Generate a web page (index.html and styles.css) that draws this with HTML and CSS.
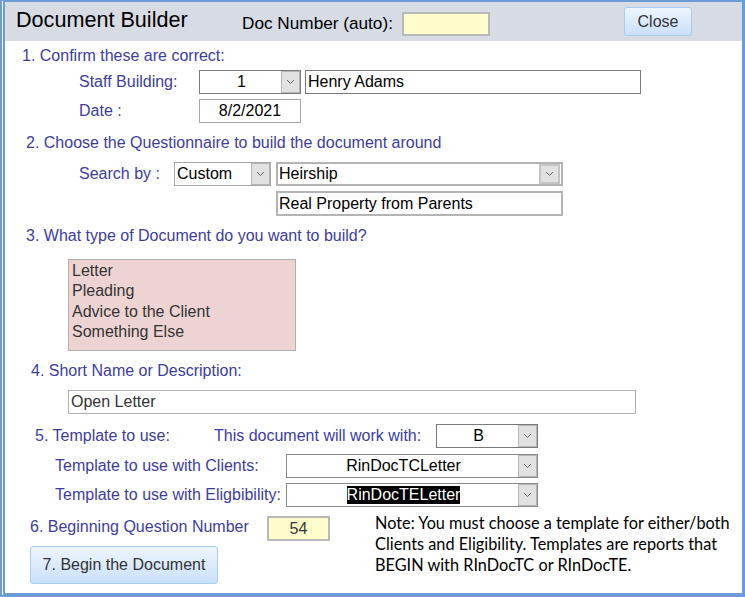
FILE: index.html
```html
<!DOCTYPE html>
<html>
<head>
<meta charset="utf-8">
<title>Document Builder</title>
<link rel="stylesheet" href="styles.css">
</head>
<body>
<div class="window">
  <div class="header">
    <h1 class="title">Document Builder</h1>
    <span class="docnum-label">Doc Number (auto):</span>
    <span class="field yellow docnum"></span>
    <button class="btn close-btn">Close</button>
  </div>
  <div class="body">
    <div class="row head h1">1. Confirm these are correct:</div>
    <div class="row staff">
      <span class="lbl lbl-a">Staff Building:</span>
      <div class="field select dark w-102"><span class="val center">1</span><span class="arrow"><svg width="9" height="6" viewBox="0 0 9 6"><polyline points="1,1 4.5,4.5 8,1" fill="none" stroke="#6a6a6a" stroke-width="1"/></svg></span></div>
      <div class="field dark name">Henry Adams</div>
    </div>
    <div class="row date">
      <span class="lbl lbl-a">Date :</span>
      <div class="field w-102 center">8/2/2021</div>
    </div>
    <div class="row head h2">2. Choose the Questionnaire to build the document around</div>
    <div class="row search">
      <span class="lbl lbl-b">Search by :</span>
      <div class="field select w-97"><span class="val">Custom</span><span class="arrow"><svg width="9" height="6" viewBox="0 0 9 6"><polyline points="1,1 4.5,4.5 8,1" fill="none" stroke="#6a6a6a" stroke-width="1"/></svg></span></div>
      <div class="field select thick w-287"><span class="val">Heirship</span><span class="arrow big"><svg width="9" height="6" viewBox="0 0 9 6"><polyline points="1,1 4.5,4.5 8,1" fill="none" stroke="#6a6a6a" stroke-width="1"/></svg></span></div>
    </div>
    <div class="row prop">
      <div class="field thick w-287">Real Property from Parents</div>
    </div>
    <div class="row head h3">3. What type of Document do you want to build?</div>
    <ul class="listbox">
      <li>Letter</li>
      <li>Pleading</li>
      <li>Advice to the Client</li>
      <li>Something Else</li>
    </ul>
    <div class="row head h4">4. Short Name or Description:</div>
    <div class="row short">
      <div class="field soft shortname">Open Letter</div>
    </div>
    <div class="row tpl">
      <span class="lbl lbl-c">5. Template to use:</span>
      <span class="lbl lbl-d">This document will work with:</span>
      <div class="field select dark w-102"><span class="val center">B</span><span class="arrow"><svg width="9" height="6" viewBox="0 0 9 6"><polyline points="1,1 4.5,4.5 8,1" fill="none" stroke="#6a6a6a" stroke-width="1"/></svg></span></div>
    </div>
    <div class="row clients">
      <span class="lbl lbl-e">Template to use with Clients:</span>
      <div class="field select mid w-252"><span class="val center">RinDocTCLetter</span><span class="arrow"><svg width="9" height="6" viewBox="0 0 9 6"><polyline points="1,1 4.5,4.5 8,1" fill="none" stroke="#6a6a6a" stroke-width="1"/></svg></span></div>
    </div>
    <div class="row elig">
      <span class="lbl lbl-e">Template to use with Eligbibility:</span>
      <div class="field select mid w-252"><span class="val center"><span class="sel">RinDocTELetter</span></span><span class="arrow"><svg width="9" height="6" viewBox="0 0 9 6"><polyline points="1,1 4.5,4.5 8,1" fill="none" stroke="#6a6a6a" stroke-width="1"/></svg></span></div>
    </div>
    <div class="bottom">
      <div class="left-col">
        <div class="row qnum">
          <span class="lbl lbl-f">6. Beginning Question Number</span>
          <div class="field yellow qbox center">54</div>
        </div>
        <button class="btn begin-btn">7. Begin the Document</button>
      </div>
      <p class="note">Note: You must choose a template for either/both Clients and Eligibility. Templates are reports that BEGIN with RInDocTC or RInDocTE.</p>
    </div>
  </div>
</div>
</body>
</html>
```

FILE: styles.css
```css
html, body {
  margin: 0;
  padding: 0;
  background: #ffffff;
}

.window {
  box-sizing: border-box;
  width: 745px;
  height: 597px;
  border-top: 2px solid #6c9cd6;
  border-left: 5px double #6c9cd6;
  border-right: 3px solid #6c9cd6;
  border-bottom: 4px solid #6c9cd6;
  background: #ffffff;
  font-family: "Liberation Sans", Arial, sans-serif;
  display: flex;
  flex-direction: column;
  overflow: hidden;
}

.header {
  height: 39px;
  background: #d6dbe4;
  display: flex;
  align-items: center;
  flex-shrink: 0;
}

.title {
  margin: 0 0 0 11px;
  font-size: 21.6px;
  font-weight: normal;
  color: #000;
  width: 226px;
  position: relative;
  top: -2px;
}

.docnum-label {
  font-size: 17.2px;
  color: #000;
  width: 160px;
  position: relative;
  top: 2px;
}

.docnum {
  width: 88px;
  height: 25px;
  margin-top: 4px;
}

.btn {
  box-sizing: border-box;
  font-family: "Liberation Sans", Arial, sans-serif;
  font-size: 16px;
  color: #333;
  background: linear-gradient(#eef5fd, #c9e0fa);
  border: 1px solid #a9cbee;
  border-radius: 3px;
  padding: 0;
  cursor: default;
}

.close-btn {
  width: 68px;
  height: 29px;
  margin-left: 134px;
}

.body {
  flex: 1;
  display: flex;
  flex-direction: column;
}

.row {
  display: flex;
  align-items: center;
  flex-shrink: 0;
}

.head {
  height: 20px;
  font-size: 16px;
  color: #3d3d9e;
}

.lbl {
  font-size: 16px;
  color: #3d3d9e;
  flex-shrink: 0;
}

.field {
  box-sizing: border-box;
  height: 24px;
  border: 1px solid #a8a8a8;
  background: #fff;
  display: flex;
  align-items: center;
  font-size: 16px;
  color: #000;
  padding: 0 2px;
  white-space: nowrap;
  flex-shrink: 0;
}

.field.dark { border-color: #7a7a7a; }
.field.mid { border-color: #8a8a8a; }
.field.thick { border: 2px solid #b4b4b4; padding: 0 1px; }
.field.soft { border-color: #b0b0b0; }
.field.center { justify-content: center; }
.yellow { background: #fffdcc; border: 2px solid #b9b9b9; }

.select {
  padding: 0 0 0 2px;
}
.select .val {
  flex: 1;
  overflow: hidden;
}
.select .val.center { text-align: center; }
.select .arrow {
  box-sizing: border-box;
  width: 19px;
  height: 22px;
  background: #e1e1e1;
  border: 1px solid #b6b6b6;
  display: flex;
  align-items: center;
  justify-content: center;
}
.select .arrow.big {
  width: 21px;
  height: 20px;
  border: 2px solid #c4c4c4;
}

.sel {
  background: #000;
  color: #fff;
  padding: 1px 0;
}

.w-102 { width: 102px; }
.w-97 { width: 97px; }
.w-287 { width: 287px; }
.w-252 { width: 252px; }

/* section 1 */
.h1 { margin-top: 5px; padding-left: 17px; }
.staff { margin-top: 4px; height: 24px; }
.lbl-a { margin-left: 74px; width: 120px; }
.name { width: 336px; margin-left: 4px; }
.date { margin-top: 5px; height: 24px; }

/* section 2 */
.h2 { margin-top: 10px; padding-left: 21px; }
.search { margin-top: 9px; height: 24px; }
.lbl-b { margin-left: 74px; width: 95px; }
.search .w-287 { margin-left: 5px; }
.prop { margin-top: 5px; height: 25px; padding-left: 271px; }
.prop .field { height: 25px; }

/* section 3 */
.h3 { margin-top: 10px; padding-left: 21px; }
.listbox {
  box-sizing: border-box;
  list-style: none;
  margin: 13px 0 0 63px;
  padding: 1px 3px;
  width: 228px;
  height: 92px;
  background: #eed3d3;
  border: 1px solid #b0b0b0;
  font-size: 16px;
  line-height: 20.3px;
  color: #333;
  flex-shrink: 0;
}

/* section 4 */
.h4 { margin-top: 10px; padding-left: 26px; }
.short { margin-top: 9px; height: 24px; padding-left: 63px; }
.shortname { width: 568px; color: #333; }

/* section 5 */
.tpl { margin-top: 10px; height: 24px; }
.lbl-c { margin-left: 30px; width: 179px; }
.lbl-d { width: 222px; }
.clients { margin-top: 6px; height: 24px; }
.elig { margin-top: 5px; height: 24px; }
.lbl-e { margin-left: 50px; width: 231px; }

/* bottom */
.bottom {
  display: flex;
  align-items: flex-start;
}
.left-col {
  display: flex;
  flex-direction: column;
  padding-top: 9px;
  width: 370px;
}
.qnum { height: 25px; }
.lbl-f { margin-left: 25px; width: 237px; position: relative; top: -2px; }
.qbox { width: 63px; height: 25px; color: #333; }
.begin-btn {
  margin: 5px 0 0 25px;
  width: 188px;
  height: 38px;
}
.note {
  margin: 5px 0 0 0;
  width: 364px;
  font-family: Lato, "Open Sans", sans-serif;
  font-size: 16.3px;
  line-height: 21px;
  color: #000;
}
```
